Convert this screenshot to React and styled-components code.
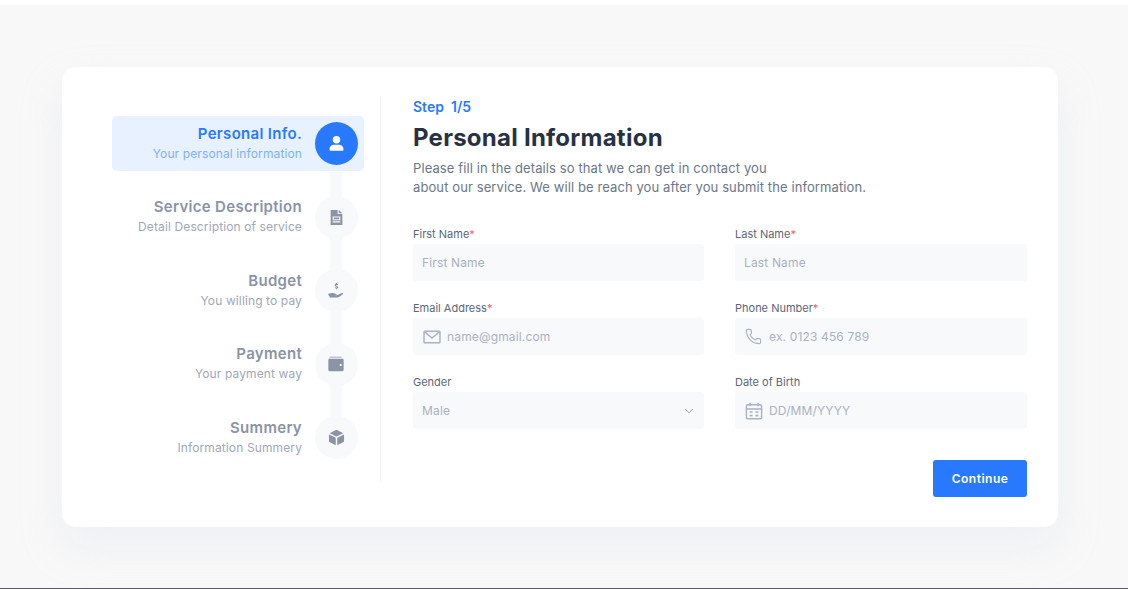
import React from 'react';
import styled, { createGlobalStyle } from 'styled-components';
import { ChevronDown, Phone } from 'lucide-react';

const GlobalStyle = createGlobalStyle`
  html, body {
    margin: 0;
    padding: 0;
    background: #ffffff;
  }

  * {
    box-sizing: border-box;
  }

  body {
    font-family: Inter, "Liberation Sans", sans-serif;
  }
`;

const UserIcon = () => (
  <svg width="17" height="17" viewBox="0 0 16 16" fill="currentColor">
    <circle cx="8" cy="4.4" r="3.5" />
    <path d="M1.4 13.4C1.4 10.7 3.4 9.2 5.6 9.2h4.8c2.2 0 4.2 1.5 4.2 4.2 0 1-.6 1.5-1.5 1.5H2.9c-.9 0-1.5-.5-1.5-1.5z" />
  </svg>
);

const DocumentIcon = () => (
  <svg width="17" height="17" viewBox="0 0 16 16" fill="currentColor">
    <path
      fillRule="evenodd"
      d="M2.5 1h6.6v3.8h4.4V15h-11V1zM4.4 7v3.6h7.2V7H4.4zm1 1h5.2v1.6H5.4V8zM4.4 11.6v1h7.2v-1H4.4z"
    />
    <path d="M10.2 1l3.3 2.9h-3.3V1z" />
  </svg>
);

const HandIcon = () => (
  <svg width="18" height="18" viewBox="0 0 18 18" fill="currentColor">
    <path d="M1 12.2c1.8-1.2 3.6-1.6 5.2-1.1l2.9.8c.9.3.7 1.3-.3 1.2l-2.4-.2 3 .3c.7 0 1.2-.1 1.8-.4l3.7-1.7c.9-.4 1.5.5.9 1.1l-3.4 2.5c-.7.5-1.4.7-2.3.7H4.6l-1.4.3L1 12.2z" />
    <path
      fill="none"
      stroke="currentColor"
      strokeWidth="1.1"
      d="M10.6 2.9c-.3-.6-2.3-.8-2.4.3-.1 1.2 2.5.8 2.5 2 0 1.1-2.1 1-2.6.3M9.4 1v1.2M9.4 6.1v1.2"
    />
  </svg>
);

const WalletIcon = () => (
  <svg width="18" height="18" viewBox="0 0 16 16" fill="currentColor">
    <path d="M2.8 1.6h9.6c.5 0 .8.3.8.7H2.6c-.3 0-.5.1-.5.2 0-.5.2-.9.7-.9z" />
    <path
      fillRule="evenodd"
      d="M2.3 3.4h11.4c.7 0 1.1.4 1.1 1.1v8.7c0 .8-.4 1.2-1.1 1.2H2.3c-.7 0-1.1-.4-1.1-1.2V4.5c0-.7.4-1.1 1.1-1.1zM11.3 8.1v1.6h1.7V8.1h-1.7z"
    />
  </svg>
);

const BoxIcon = () => (
  <svg width="17" height="17" viewBox="0 0 16 16" fill="currentColor">
    <path d="M8 .8l6.4 3.2L8 7.1 1.6 4 8 .8z" />
    <path d="M.9 5.2l6.4 3.1v7L1.8 12.5c-.6-.3-.9-.7-.9-1.4V5.2z" />
    <path d="M15.1 5.2L8.7 8.3v7l5.5-2.8c.6-.3.9-.7.9-1.4V5.2z" />
  </svg>
);

const MailIcon = () => (
  <svg width="18" height="14" viewBox="0 0 18 14" fill="none" stroke="currentColor" strokeWidth="1.4">
    <rect x="1" y="1.2" width="16" height="11.6" rx="0.8" />
    <path d="M1.4 1.6L9 8l7.6-6.4" />
  </svg>
);

const CalendarIcon = () => (
  <svg width="18" height="18" viewBox="0 0 18 18" fill="none" stroke="currentColor" strokeWidth="1.4">
    <rect x="1.4" y="2.8" width="15.2" height="14" rx="1.4" />
    <path d="M1.4 7h15.2M5 .8v3.4M13 .8v3.4" />
    <path strokeWidth="1.6" d="M4.6 10h3M10.4 10h3M4.6 13.6h3M10.4 13.6h3" />
  </svg>
);

const steps = [
  { title: 'Personal Info.', subtitle: 'Your personal information', icon: <UserIcon />, active: true },
  { title: 'Service Description', subtitle: 'Detail Description of service', icon: <DocumentIcon /> },
  { title: 'Budget', subtitle: 'You willing to pay', icon: <HandIcon /> },
  { title: 'Payment', subtitle: 'Your payment way', icon: <WalletIcon /> },
  { title: 'Summery', subtitle: 'Information Summery', icon: <BoxIcon /> },
];

function App() {
  return (
    <Page>
      <GlobalStyle />
      <Canvas>
        <Card>
          <Sidebar>
            <StepList>
              {steps.map(step => (
                <Step key={step.title} $active={step.active}>
                  <StepText>
                    <StepTitle $active={step.active}>{step.title}</StepTitle>
                    <StepSubtitle $active={step.active}>{step.subtitle}</StepSubtitle>
                  </StepText>
                  <StepBadge $active={step.active}>{step.icon}</StepBadge>
                </Step>
              ))}
            </StepList>
          </Sidebar>

          <Main>
            <StepCount>Step&nbsp; 1/5</StepCount>
            <Heading>Personal Information</Heading>
            <Intro>
              Please fill in the details so that we can get in contact you
              <br />
              about our service. We will be reach you after you submit the information.
            </Intro>

            <Form>
              <Field>
                <Label>First Name<Required>*</Required></Label>
                <InputBox>
                  <Input placeholder="First Name" />
                </InputBox>
              </Field>
              <Field>
                <Label>Last Name<Required>*</Required></Label>
                <InputBox>
                  <Input placeholder="Last Name" />
                </InputBox>
              </Field>
              <Field>
                <Label>Email Address<Required>*</Required></Label>
                <InputBox>
                  <FieldIcon><MailIcon /></FieldIcon>
                  <Input placeholder="name@gmail.com" />
                </InputBox>
              </Field>
              <Field>
                <Label>Phone Number<Required>*</Required></Label>
                <InputBox>
                  <FieldIcon><Phone size={17} strokeWidth={1.6} /></FieldIcon>
                  <Input placeholder="ex. 0123 456 789" />
                </InputBox>
              </Field>
              <Field>
                <Label>Gender</Label>
                <InputBox>
                  <Select defaultValue="Male">
                    <option>Male</option>
                    <option>Female</option>
                  </Select>
                  <Chevron><ChevronDown size={14} strokeWidth={1.6} /></Chevron>
                </InputBox>
              </Field>
              <Field>
                <Label>Date of Birth</Label>
                <InputBox>
                  <FieldIcon><CalendarIcon /></FieldIcon>
                  <Input placeholder="DD/MM/YYYY" />
                </InputBox>
              </Field>
            </Form>

            <Actions>
              <ContinueButton type="button">Continue</ContinueButton>
            </Actions>
          </Main>
        </Card>
      </Canvas>
    </Page>
  );
}

const Page = styled.div`
  height: 589px;
  padding-top: 5px;
  background: #ffffff;
  overflow: hidden;
`;

const Canvas = styled.div`
  height: 584px;
  padding: 62px 70px 0 62px;
  background: #f8f8f8;
  border-bottom: 1px solid #5c5f66;
`;

const Card = styled.div`
  display: flex;
  height: 460px;
  padding: 29px 31px 0 50px;
  background: #ffffff;
  border-radius: 14px;
  box-shadow: 0 20px 40px rgba(216, 224, 240, 0.28);
`;

const Sidebar = styled.aside`
  flex: 0 0 269px;
  height: 386px;
  padding: 20px 16px 0 0;
  border-right: 1px solid #f3f4f6;
`;

const StepList = styled.div`
  position: relative;
  display: flex;
  flex-direction: column;
  gap: 18.6px;

  &::before {
    content: '';
    position: absolute;
    top: 40px;
    bottom: 30px;
    right: 22.5px;
    width: 12px;
    background: #f8f9fb;
  }
`;

const Step = styled.div`
  position: relative;
  display: flex;
  align-items: center;
  justify-content: flex-end;
  gap: 12.5px;
  height: 55px;
  padding-right: 6.5px;
  border-radius: 5px;
  background: ${props => (props.$active ? '#e8f1ff' : 'transparent')};
`;

const StepText = styled.div`
  padding-bottom: 1px;
  text-align: right;
`;

const StepTitle = styled.div`
  font-size: 15px;
  line-height: 20px;
  font-weight: 600;
  letter-spacing: 0.3px;
  color: ${props => (props.$active ? '#2979ff' : '#8a94a6')};
`;

const StepSubtitle = styled.div`
  font-size: 12px;
  line-height: 19px;
  font-weight: 400;
  letter-spacing: 0.12px;
  color: ${props => (props.$active ? '#7db0ff' : '#a0a8b8')};
`;

const StepBadge = styled.div`
  display: flex;
  align-items: center;
  justify-content: center;
  width: 43px;
  height: 43px;
  border-radius: 50%;
  background: ${props => (props.$active ? '#2979ff' : '#f8f9fb')};
  color: ${props => (props.$active ? '#ffffff' : '#8a94a6')};
`;

const Main = styled.main`
  flex: 1;
  padding-left: 32px;
`;

const StepCount = styled.div`
  padding-top: 1px;
  font-size: 14px;
  line-height: 20px;
  font-weight: 600;
  color: #2979ff;
`;

const Heading = styled.h1`
  margin: 5px 0 0;
  font-size: 24px;
  line-height: 32px;
  font-weight: 700;
  letter-spacing: 0.25px;
  color: #273142;
`;

const Intro = styled.p`
  margin: 5px 0 0;
  font-size: 13px;
  line-height: 19px;
  letter-spacing: 0.1px;
  color: #6b7689;
`;

const Form = styled.div`
  display: grid;
  grid-template-columns: 291px 292px;
  column-gap: 31px;
  row-gap: 17px;
  margin-top: 27px;
`;

const Field = styled.div`
  display: flex;
  flex-direction: column;
  gap: 1px;
`;

const Label = styled.label`
  padding-top: 1px;
  font-size: 11px;
  line-height: 18px;
  font-weight: 400;
  color: #5b6679;
`;

const Required = styled.span`
  color: #ff5a5f;
`;

const InputBox = styled.div`
  position: relative;
  display: flex;
  align-items: center;
  height: 37px;
  padding-left: 9px;
  border-radius: 3px;
  background: #f8f9fb;
`;

const FieldIcon = styled.span`
  display: flex;
  flex: 0 0 24px;
  align-items: center;
  margin-left: 1px;
  color: #a9b2c1;
`;

const Input = styled.input`
  flex: 1;
  min-width: 0;
  padding: 0;
  border: 0;
  outline: 0;
  background: transparent;
  font-family: inherit;
  font-size: 12px;
  letter-spacing: 0.15px;
  color: #273142;

  &::placeholder {
    color: #a9b2c1;
    opacity: 1;
  }
`;

const Select = styled.select`
  flex: 1;
  padding: 0;
  border: 0;
  outline: 0;
  appearance: none;
  background: transparent;
  font-family: inherit;
  font-size: 12px;
  letter-spacing: 0.15px;
  color: #a9b2c1;
`;

const Chevron = styled.span`
  position: absolute;
  top: 12px;
  right: 8px;
  display: flex;
  color: #8a94a6;
  pointer-events: none;
`;

const Actions = styled.div`
  display: flex;
  justify-content: flex-end;
  margin-top: 31px;
`;

const ContinueButton = styled.button`
  width: 94px;
  height: 37px;
  border: 0;
  border-radius: 3px;
  background: #2979ff;
  color: #ffffff;
  font-family: inherit;
  font-size: 12px;
  font-weight: 600;
  letter-spacing: 0.5px;
`;

export default App;
